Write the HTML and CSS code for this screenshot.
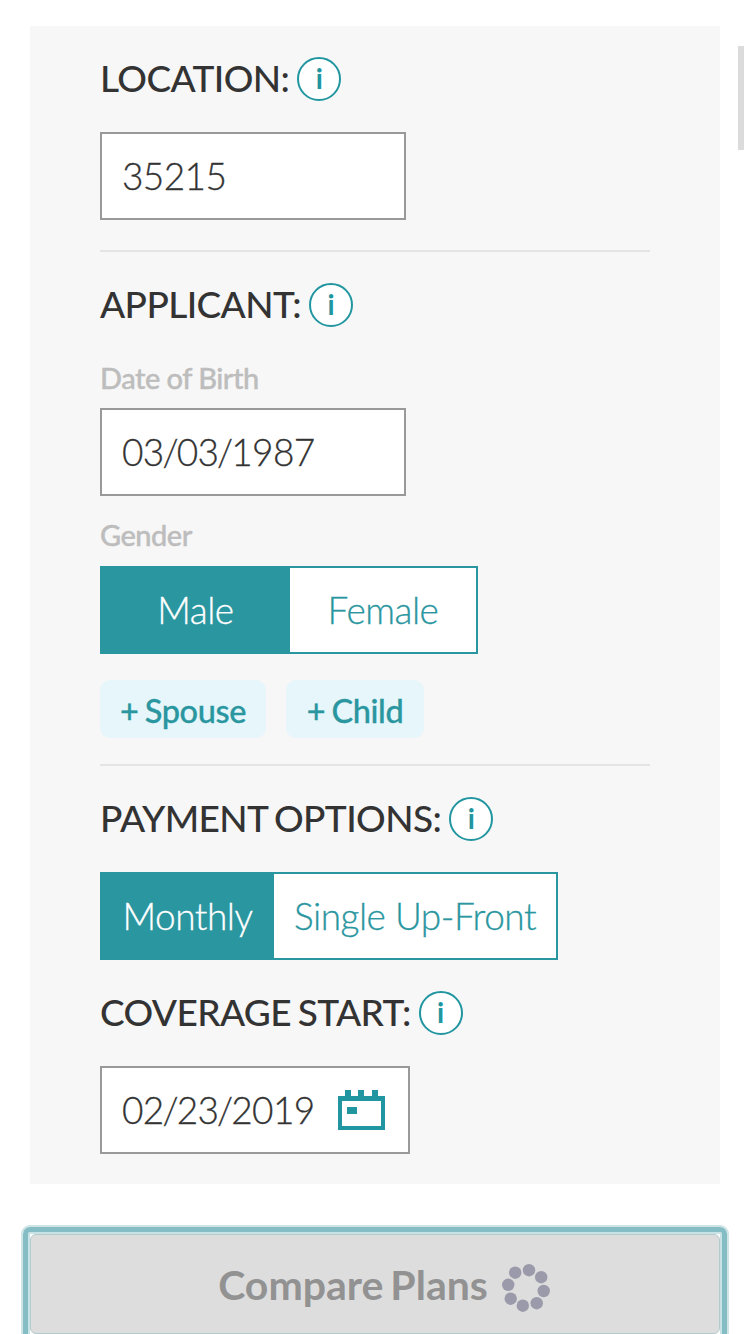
FILE: index.html
```
<!DOCTYPE html>
<html lang="en">
<head>
<meta charset="utf-8">
<title>Compare Plans</title>
<link rel="stylesheet" href="styles.css">
</head>
<body>
<main class="page">
  <form class="panel">
    <section class="section">
      <h2 class="heading"><span class="title">LOCATION:</span><span class="info">i</span></h2>
      <div class="field"><span class="value">35215</span></div>
    </section>
    <section class="section section-ruled applicant">
      <h2 class="heading"><span class="title">APPLICANT:</span><span class="info">i</span></h2>
      <div class="label label-birth">Date of Birth</div>
      <div class="field"><span class="value">03<span class="slash">/</span>03<span class="slash">/</span>1987</span></div>
      <div class="label label-gender">Gender</div>
      <div class="toggle toggle-gender"><span class="option option-on">Male</span><span class="option">Female</span></div>
      <div class="chips"><span class="chip chip-spouse">+ Spouse</span><span class="chip chip-child">+ Child</span></div>
    </section>
    <section class="section section-ruled">
      <h2 class="heading heading-wide"><span class="title">PAYMENT OPTIONS:</span><span class="info">i</span></h2>
      <div class="toggle toggle-payment"><span class="option option-on">Monthly</span><span class="option">Single Up-Front</span></div>
    </section>
    <section class="section section-coverage">
      <h2 class="heading heading-wide"><span class="title">COVERAGE START:</span><span class="info">i</span></h2>
      <div class="field field-date"><span class="value">02<span class="slash">/</span>23<span class="slash">/</span>2019</span>
        <svg class="calendar" viewBox="0 0 47 40" width="47" height="40"><path fill="#2196a0" fill-rule="evenodd" d="M0 6H7V0H13V6H20V0H26V6H34V0H40V6H47V40H0ZM4 11V36H43V11ZM9 17H19V24H9Z"/></svg>
      </div>
    </section>
  </form>
  <div class="submit"><span class="submit-text">Compare Plans</span>
    <svg class="spinner" viewBox="0 0 48 48" width="48" height="48" fill="#9b9aaa"><circle cx="27" cy="6.200" r="6.200"/><circle cx="39.200" cy="13.200" r="6.200"/><circle cx="41.700" cy="27" r="6.200"/><circle cx="34.700" cy="39.200" r="6.200"/><circle cx="20.800" cy="41.700" r="6.200"/><circle cx="8.700" cy="34.700" r="6.200"/><circle cx="6.200" cy="20.800" r="6.200"/><circle cx="13.200" cy="8.700" r="6.200"/></svg>
  </div>
  <div class="scrollbar"></div>
</main>
</body>
</html>
```
FILE: styles.css
```
* { box-sizing: border-box; }
html, body { margin: 0; height: 1334px; overflow: hidden; }
body { background: #fff; font-family: Lato, "Open Sans", sans-serif; color: #333; }
.page { position: relative; height: 1334px; padding: 26px 30px 0; overflow: hidden; }
.panel { height: 1158px; padding: 31px 70px 0; background: #f7f7f7; }
.section-ruled { margin-top: 30px; padding-top: 31px; border-top: 2px solid #e4e4e4; }
.section-coverage { margin-top: 31px; }
.applicant + .section-ruled { margin-top: 26px; }
.heading { display: flex; align-items: center; gap: 8px; height: 44px; margin: 0 0 31px; font-size: 37px; font-weight: 500; letter-spacing: -0.6px; white-space: nowrap; }
.heading-wide { word-spacing: -2px; }
.title { line-height: 44px; padding-bottom: 3px; }
.applicant .heading { margin-bottom: 32px; }
.info { width: 44px; height: 44px; border: 2px solid #2196a0; border-radius: 50%; background: #fff; color: #2196a0; font-size: 28px; line-height: 39px; font-weight: 700; letter-spacing: 0; text-align: center; }
.label { height: 49px; line-height: 38px; font-size: 29px; font-weight: 500; letter-spacing: -0.5px; color: #bdbdbd; -webkit-text-stroke: 0.4px currentColor; }
.label-gender { height: 50px; margin-top: 20px; }
.field { display: flex; align-items: center; justify-content: space-between; width: 306px; height: 88px; padding: 0 23px 0 20px; border: 2px solid #999; background: #fff; }
.value { padding-bottom: 1px; font-size: 37px; font-weight: 300; letter-spacing: -0.6px; -webkit-text-stroke: 0.3px currentColor; }
.slash { margin: 0 -1.3px; }
.field-date { width: 310px; }
.toggle { display: grid; height: 88px; border: 2px solid #2a96a0; background: #fff; color: #2a96a0; font-size: 37px; line-height: 84px; font-weight: 300; letter-spacing: -0.5px; text-align: center; white-space: nowrap; -webkit-text-stroke: 0.3px currentColor; }
.toggle-gender { width: 378px; grid-template-columns: 188px 1fr; }
.toggle-payment { width: 458px; grid-template-columns: 172px 1fr; }
.option-on { padding-right: 1px; background: #2a96a0; color: #fff; -webkit-text-stroke: 0.3px currentColor; }
.chips { display: flex; gap: 20px; margin-top: 26px; }
.chip { height: 58px; border-radius: 10px; background: #e6f6fa; color: #2a96a0; font-size: 32.5px; line-height: 61px; font-weight: 500; letter-spacing: -0.4px; text-align: center; word-spacing: -1.5px; -webkit-text-stroke: 0.3px currentColor; }
.chip-spouse { width: 166px; }
.chip-child { width: 138px; }
.submit { display: flex; align-items: center; justify-content: center; gap: 14px; height: 100px; margin-top: 50px; padding-top: 7px; padding-left: 18px; border: 1px solid #b2cccd; border-radius: 6px; background: #ddd; color: #929292; font-size: 41px; font-weight: 700; position: relative; }
.submit-text { padding-bottom: 6px; word-spacing: -3px; }
.submit::before { content: ""; position: absolute; inset: -8px; border: 5px solid #84bdc4; border-radius: 7px; box-shadow: 0 0 0 2px #cfe5e5, inset 0 0 0 2px #c9e2e5; }
.scrollbar { position: absolute; right: 6px; top: 46px; width: 6px; height: 104px; background: #dbdbdb; }
```
